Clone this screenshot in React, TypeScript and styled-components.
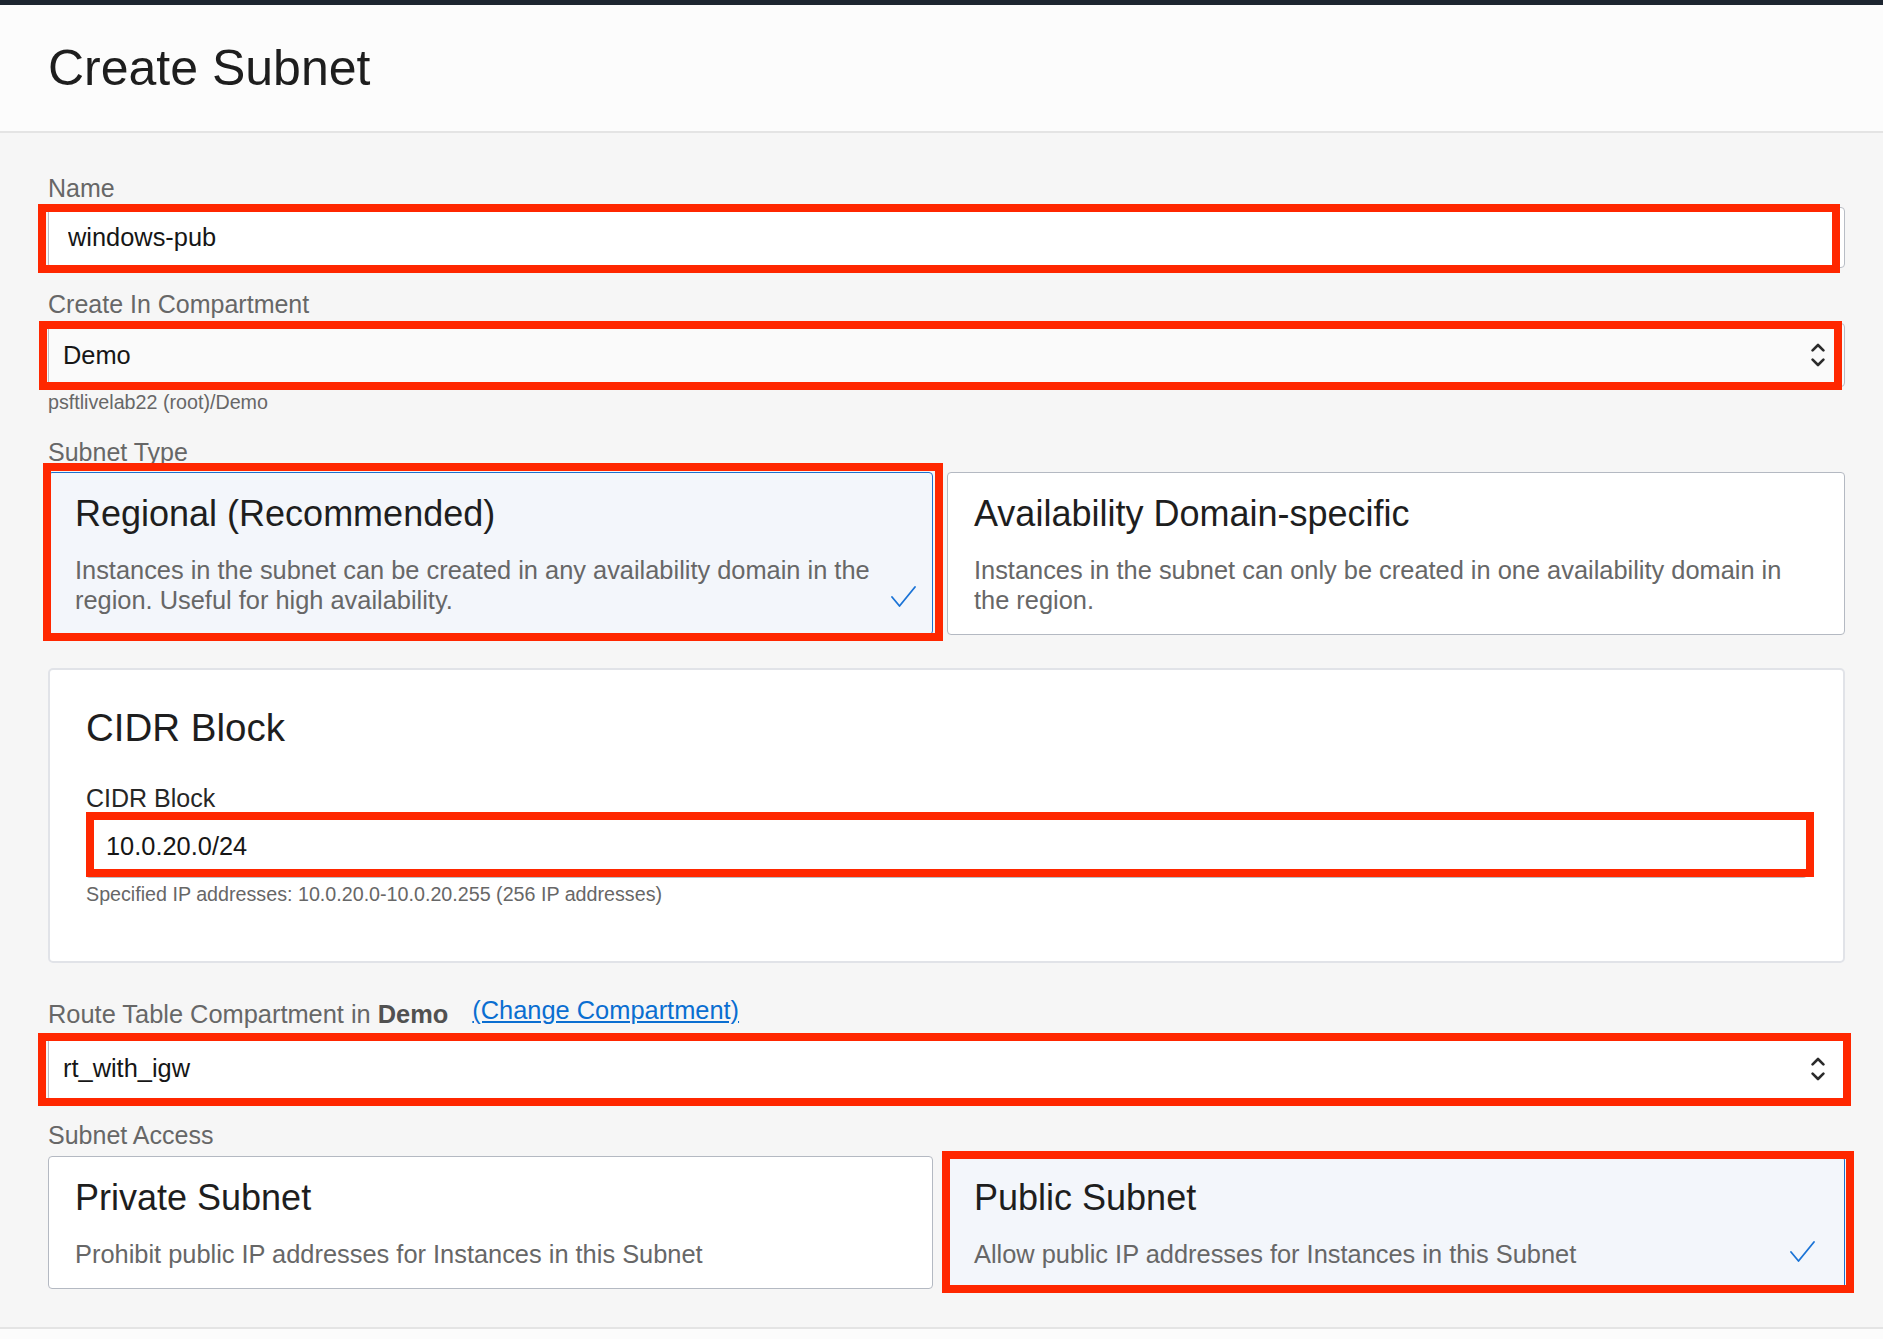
import React from "react";
import styled, { createGlobalStyle } from "styled-components";

const GlobalStyle = createGlobalStyle`
  html, body { margin: 0; padding: 0; background: #f6f6f6; }
  body {
    font-family: "Liberation Sans", Arial, Helvetica, sans-serif;
    -webkit-font-smoothing: antialiased;
  }
  * { box-sizing: border-box; }
`;

const Page = styled.div`
  display: flex;
  flex-direction: column;
  min-height: 1339px;
  background: #f6f6f6;
`;

const TopBar = styled.div`
  height: 5px;
  background: #1d2530;
`;

const Header = styled.header`
  height: 128px;
  padding: 33px 48px 0;
  background: #fcfcfc;
  border-bottom: 2px solid #e4e4e4;
`;

const Title = styled.h1`
  margin: 0;
  font-size: 50px;
  line-height: 60px;
  font-weight: 400;
  color: #1e1e1e;
`;

const Body = styled.main`
  display: flex;
  flex-direction: column;
  padding: 40px 38px 38px 48px;
`;

const Label = styled.div<{ $mt?: number; $mb?: number; $dark?: boolean }>`
  margin-top: ${(p) => p.$mt ?? 0}px;
  margin-bottom: ${(p) => p.$mb ?? 0}px;
  font-size: 25px;
  line-height: 30px;
  color: ${(p) => (p.$dark ? "#262626" : "#676767")};
`;

const Control = styled.div<{ $mt?: number }>`
  position: relative;
  margin-top: ${(p) => p.$mt ?? 0}px;
`;

const Highlight = styled.span<{ $t: number; $l: number; $r: number; $b: number }>`
  position: absolute;
  top: ${(p) => p.$t}px;
  left: ${(p) => p.$l}px;
  right: ${(p) => p.$r}px;
  bottom: ${(p) => p.$b}px;
  border: 8px solid #ff2700;
  pointer-events: none;
  z-index: 2;
`;

const TextInput = styled.input<{ $h: number; $thickBottom?: boolean }>`
  display: block;
  width: 100%;
  height: ${(p) => p.$h}px;
  padding: 0 19px;
  border: 1px solid #b9bdc5;
  border-bottom-width: ${(p) => (p.$thickBottom ? 2 : 1)}px;
  border-radius: 4px;
  background: #ffffff;
  font-family: "Liberation Sans", Arial, sans-serif;
  font-size: 25.4px;
  color: #161616;
  outline: none;
`;

const SelectBox = styled.div<{ $h: number; $bg: string }>`
  display: flex;
  align-items: center;
  justify-content: space-between;
  height: ${(p) => p.$h}px;
  padding: 0 19px 0 14px;
  border: 1px solid #b9bdc5;
  border-radius: 4px;
  background: ${(p) => p.$bg};
  font-size: 25.4px;
  color: #161616;
`;

const HelpText = styled.div<{ $mt: number }>`
  margin-top: ${(p) => p.$mt}px;
  font-size: 19.7px;
  line-height: 24px;
  color: #676767;
`;

const CardGrid = styled.div`
  display: grid;
  grid-template-columns: 885fr 898fr;
  gap: 14px;
`;

const Card = styled.div<{ $selected?: boolean }>`
  position: relative;
  padding: 19px 26px 19px 26px;
  border: 1px solid ${(p) => (p.$selected ? "#1c6fcf" : "#b4b9c2")};
  border-radius: 4px;
  background: ${(p) => (p.$selected ? "#f3f6fb" : "#ffffff")};
`;

const CardTitle = styled.div`
  font-size: 36px;
  line-height: 44px;
  color: #1e1e1e;
  margin-bottom: 19px;
`;

const CardText = styled.div`
  font-size: 25.4px;
  line-height: 30px;
  color: #676767;
`;

const CheckWrap = styled.span<{ $r: number; $b: number }>`
  position: absolute;
  right: ${(p) => p.$r}px;
  bottom: ${(p) => p.$b}px;
  width: 25px;
  height: 21px;
  display: flex;
`;

const Panel = styled.section`
  margin-top: 33px;
  padding: 36px 36px 55px;
  background: #ffffff;
  border: 2px solid #e1e3e8;
  border-radius: 5px;
`;

const PanelTitle = styled.h2`
  margin: 0;
  font-size: 38.5px;
  line-height: 44px;
  font-weight: 400;
  color: #1e1e1e;
`;

const RouteRow = styled.div`
  display: flex;
  align-items: flex-start;
  gap: 24px;
  margin-top: 32px;
`;

const RouteLabel = styled.div`
  padding-top: 4px;
  font-size: 25.4px;
  line-height: 30px;
  color: #676767;
  strong {
    color: #515151;
    font-weight: 700;
  }
`;

const Link = styled.a`
  font-size: 25.4px;
  line-height: 30px;
  color: #0a6ed1;
  text-decoration: underline;
  cursor: pointer;
`;

const Footer = styled.footer`
  height: 60px;
  border-top: 2px solid #e4e4e4;
  background: #fcfcfc;
`;

const Chevrons = () => (
  <svg width="14" height="26" viewBox="0 0 14 26" fill="none" stroke="#2b2b2b" strokeWidth="2.6" strokeLinecap="round" strokeLinejoin="round">
    <path d="M1.6 8.4 L7 3 L12.4 8.4" />
    <path d="M1.6 17.6 L7 23 L12.4 17.6" />
  </svg>
);

const Check = () => (
  <svg width="25" height="21" viewBox="0 0 25 21" fill="none" stroke="#1a73d6" strokeWidth="1.8" strokeLinecap="round" strokeLinejoin="round">
    <path d="M1 11 L8.5 20 L24 1" />
  </svg>
);

export default function App() {
  return (
    <>
      <GlobalStyle />
      <Page>
        <TopBar />
        <Header>
          <Title>Create Subnet</Title>
        </Header>
        <Body>
          <Label $mb={4}>Name</Label>
          <Control>
            <TextInput $h={61} defaultValue="windows-pub" readOnly />
            <Highlight $t={-3} $l={-10} $r={5} $b={-5} />
          </Control>

          <Label $mt={21} $mb={4}>Create In Compartment</Label>
          <Control>
            <SelectBox $h={64} $bg="#fafafa">
              <span>Demo</span>
              <Chevrons />
            </SelectBox>
            <Highlight $t={-2} $l={-9} $r={3} $b={-3} />
          </Control>
          <HelpText $mt={3}>psftlivelab22 (root)/Demo</HelpText>

          <Label $mt={23} $mb={5}>Subnet Type</Label>
          <CardGrid>
            <Control>
              <Card $selected>
                <CardTitle>Regional (Recommended)</CardTitle>
                <CardText>
                  Instances in the subnet can be created in any availability domain in the region. Useful for high availability.
                </CardText>
                <CheckWrap $r={16} $b={27}>
                  <Check />
                </CheckWrap>
              </Card>
              <Highlight $t={-9} $l={-5} $r={-10} $b={-6} />
            </Control>
            <Card>
              <CardTitle>Availability Domain-specific</CardTitle>
              <CardText>
                Instances in the subnet can only be created in one availability domain in the region.
              </CardText>
            </Card>
          </CardGrid>

          <Panel>
            <PanelTitle>CIDR Block</PanelTitle>
            <Label $mt={33} $mb={2} $dark>CIDR Block</Label>
            <Control>
              <TextInput $h={63} $thickBottom defaultValue="10.0.20.0/24" readOnly />
              <Highlight $t={-3} $l={0} $r={-7} $b={1} />
            </Control>
            <HelpText $mt={4}>Specified IP addresses: 10.0.20.0-10.0.20.255 (256 IP addresses)</HelpText>
          </Panel>

          <RouteRow>
            <RouteLabel>
              Route Table Compartment in <strong>Demo</strong>
            </RouteLabel>
            <Link>(Change Compartment)</Link>
          </RouteRow>
          <Control $mt={7}>
            <SelectBox $h={65} $bg="#ffffff">
              <span>rt_with_igw</span>
              <Chevrons />
            </SelectBox>
            <Highlight $t={-3} $l={-10} $r={-6} $b={-5} />
          </Control>

          <Label $mt={19} $mb={6}>Subnet Access</Label>
          <CardGrid>
            <Card>
              <CardTitle>Private Subnet</CardTitle>
              <CardText>Prohibit public IP addresses for Instances in this Subnet</CardText>
            </Card>
            <Control>
              <Card $selected>
                <CardTitle>Public Subnet</CardTitle>
                <CardText>Allow public IP addresses for Instances in this Subnet</CardText>
                <CheckWrap $r={29} $b={26}>
                  <Check />
                </CheckWrap>
              </Card>
              <Highlight $t={-5} $l={-5} $r={-9} $b={-4} />
            </Control>
          </CardGrid>
        </Body>
        <Footer />
      </Page>
    </>
  );
}
